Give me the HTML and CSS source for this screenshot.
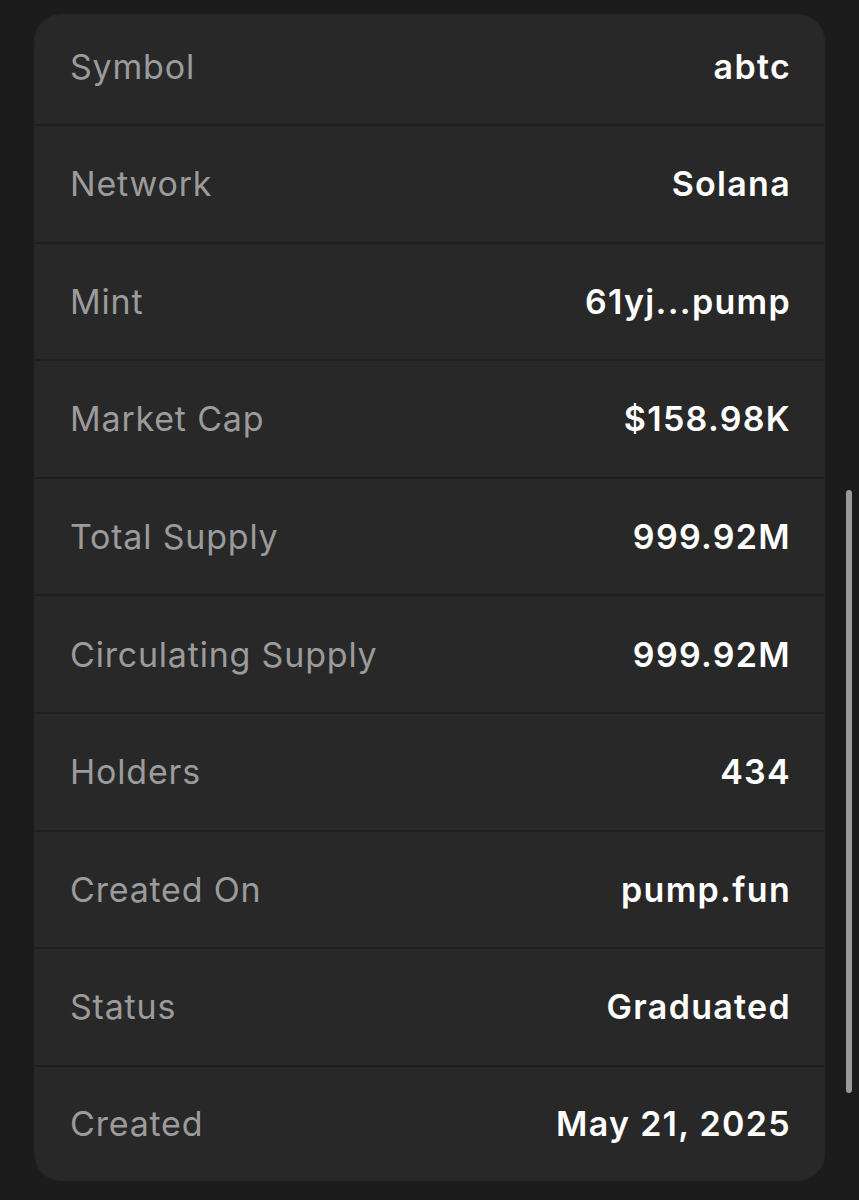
FILE: index.html
```html
<!DOCTYPE html>
<html>
<head>
<meta charset="utf-8">
<link rel="stylesheet" href="styles.css">
</head>
<body>
<div class="page">
  <div class="card">
    <div class="row first"><span class="label">Symbol</span><span class="value">abtc</span></div>
    <div class="row"><span class="label">Network</span><span class="value">Solana</span></div>
    <div class="row"><span class="label">Mint</span><span class="value">61yj...pump</span></div>
    <div class="row"><span class="label">Market Cap</span><span class="value">$158.98K</span></div>
    <div class="row"><span class="label">Total Supply</span><span class="value">999.92M</span></div>
    <div class="row"><span class="label">Circulating Supply</span><span class="value">999.92M</span></div>
    <div class="row"><span class="label">Holders</span><span class="value">434</span></div>
    <div class="row"><span class="label">Created On</span><span class="value">pump.fun</span></div>
    <div class="row"><span class="label">Status</span><span class="value">Graduated</span></div>
    <div class="row last"><span class="label">Created</span><span class="value">May 21, 2025</span></div>
  </div>
  <div class="scrollbar"></div>
</div>
</body>
</html>
```
FILE: styles.css
```css
html, body {
  margin: 0;
  padding: 0;
  background: #1c1c1c;
}
body {
  width: 859px;
  height: 1200px;
  overflow: hidden;
  font-family: Inter, "Noto Sans", sans-serif;
}
.page {
  position: relative;
  padding: 15px 0 0 35px;
}
.card {
  width: 789px;
  background: #282828;
  border-radius: 26px;
  overflow: hidden;
  box-shadow: 0 0 0 1px #262626;
}
.row {
  display: flex;
  align-items: center;
  justify-content: space-between;
  height: 115.6px;
  padding: 0 34px 0 35px;
  border-top: 2px solid #1e1e1e;
}
.row.first {
  height: 103px;
  padding-bottom: 6px;
  border-top: none;
}
.row.last {
  height: 113px;
}
.label {
  color: #9b9b9b;
  font-size: 34px;
  font-weight: 400;
  letter-spacing: 0.8px;
}
.value {
  color: #ffffff;
  font-size: 34px;
  font-weight: 600;
  letter-spacing: 1.3px;
  margin-right: -1px;
}
.scrollbar {
  position: absolute;
  left: 846px;
  top: 490px;
  width: 6px;
  height: 603px;
  border-radius: 3px;
  background: #9a9a9a;
}
```
